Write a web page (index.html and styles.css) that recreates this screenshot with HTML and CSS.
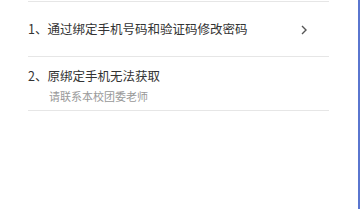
FILE: index.html
```html
<!DOCTYPE html>
<html lang="zh-CN">
<head>
  <meta charset="UTF-8">
  <title>修改密码</title>
  <meta name="viewport" content="width=device-width, initial-scale=1.0">
  <link rel="stylesheet" href="styles.css">
</head>
<body>
  <div class="page">
    <ul class="options">
      <li class="option">
        <span class="option-title">1、通过绑定手机号码和验证码修改密码</span>
        <svg class="arrow" width="8" height="10" viewBox="0 0 8 10">
          <polyline points="2,1 6,5 2,9" fill="none" stroke="#555" stroke-width="1.4"/>
        </svg>
      </li>
      <li class="option option-info">
        <span class="option-title">2、原绑定手机无法获取</span>
        <span class="option-tip">请联系本校团委老师</span>
      </li>
    </ul>
  </div>
</body>
</html>
```

FILE: styles.css
```css
* { box-sizing: border-box; }
html, body { height: 100%; }
body {
  margin: 0;
  background: #fff;
  font-family: "Microsoft YaHei", "Noto Sans CJK SC", "Noto Sans", sans-serif;
  color: #333;
}
.page {
  height: 100%;
  padding-top: 1px;
  border-right: 2px solid #5a76cf;
}
.options {
  list-style: none;
  margin: 0 0 0 28px;
  padding: 0;
  width: 301px;
}
.option {
  height: 55px;
  border-top: 1px solid #e6e6e6;
  display: flex;
  align-items: center;
  justify-content: space-between;
  padding-right: 21px;
}
.option:last-child { border-bottom: 1px solid #e6e6e6; }
.option-title {
  font-size: 12.5px;
  line-height: 18px;
  color: #333;
}
.arrow { display: block; margin-top: 1px; }
.option-info {
  flex-direction: column;
  align-items: flex-start;
  justify-content: flex-start;
  padding-top: 10px;
}
.option-tip {
  font-size: 11px;
  line-height: 18px;
  margin-top: 2px;
  padding-left: 21px;
  color: #999;
}
```
